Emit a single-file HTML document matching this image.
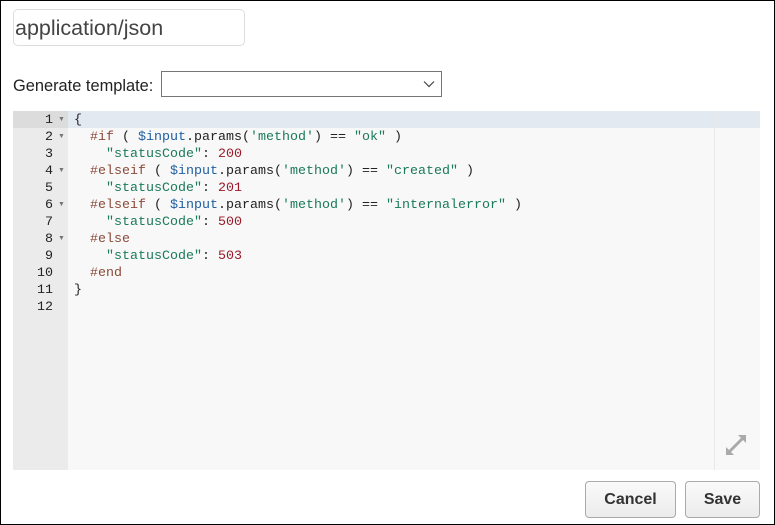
<!DOCTYPE html>
<html><head><style>
html,body{margin:0;padding:0;width:775px;height:525px;overflow:hidden;background:#fff}
body{position:relative;font-family:"Liberation Sans",sans-serif}
.frame{position:absolute;left:0;top:0;width:775px;height:525px;box-sizing:border-box;border:1px solid #000}
.inp{position:absolute;left:13px;top:9px;width:232px;height:37px;border:1px solid #ddd;border-radius:5px;font-size:21.5px;color:#444;line-height:37px;padding-left:1px;box-sizing:border-box}
.lbl{position:absolute;left:13px;top:77px;font-size:16.4px;color:#222}
.sel{position:absolute;left:161px;top:71px;width:281px;height:26px;border:1px solid #767676;box-sizing:border-box}
.ed{position:absolute;left:13px;top:111px;width:747px;height:359px;background:#f8f8f8}
.gut{position:absolute;left:0;top:0;width:55px;height:359px;background:#ebebeb}
.act{position:absolute;left:0;top:0;width:747px;height:17px;background:#e3e9f1}
.gact{position:absolute;left:0;top:0;width:55px;height:17px;background:#dcdcdc}
.pm{position:absolute;left:701px;top:0;width:1px;height:359px;background:#e8e8e8}
.ln,.code{position:absolute;top:1px;font-family:"Liberation Mono",monospace;font-size:13.33px;line-height:17px;white-space:pre;color:#222}
.ln{left:0;width:40px;text-align:right}
.fold{position:absolute;left:45px;font-size:7px;color:#777}
.code{left:61px}
.k{color:#8b4a3a}.v{color:#2060a0}.s{color:#1a7a5a}.n{color:#9a1a2a}
.btn{position:absolute;top:481px;height:37px;border:1px solid #aaa;border-radius:4px;background:linear-gradient(#fafafa,#ececec);font-weight:bold;font-size:16px;color:#333;text-align:center;line-height:36px;box-sizing:border-box}
</style></head><body>
<div class="frame"></div>
<div class="inp">application/json</div>
<div class="lbl">Generate template:</div>
<div class="sel"><svg style="position:absolute;right:6px;top:8px" width="12" height="8"><path d="M1 1.5 L6 6.5 L11 1.5" stroke="#444" fill="none" stroke-width="1.2"/></svg></div>
<div class="ed">
<div class="gut"></div><div class="act"></div><div class="gact"></div><div class="pm"></div>
<div class="ln">1
2
3
4
5
6
7
8
9
10
11
12</div>
<div class="fold" style="top:5px">▼</div><div class="fold" style="top:22px">▼</div><div class="fold" style="top:56px">▼</div><div class="fold" style="top:90px">▼</div><div class="fold" style="top:124px">▼</div>
<div class="code">{
  <span class="k">#if</span> ( <span class="v">$input</span>.params(<span class="s">'method'</span>) == <span class="s">"ok"</span> )
    <span class="s">"statusCode"</span>: <span class="n">200</span>
  <span class="k">#elseif</span> ( <span class="v">$input</span>.params(<span class="s">'method'</span>) == <span class="s">"created"</span> )
    <span class="s">"statusCode"</span>: <span class="n">201</span>
  <span class="k">#elseif</span> ( <span class="v">$input</span>.params(<span class="s">'method'</span>) == <span class="s">"internalerror"</span> )
    <span class="s">"statusCode"</span>: <span class="n">500</span>
  <span class="k">#else</span>
    <span class="s">"statusCode"</span>: <span class="n">503</span>
  <span class="k">#end</span>
}
</div>
<svg style="position:absolute;left:711px;top:322px" width="24" height="24"><g stroke="#aaa" stroke-width="3" fill="#aaa"><path d="M4 20 L20 4" /><path d="M2 22 L2 14 L10 22Z" stroke-width="0"/><path d="M22 2 L22 10 L14 2Z" stroke-width="0"/></g></svg>
</div>
<div class="btn" style="left:585px;width:91px">Cancel</div>
<div class="btn" style="left:685px;width:75px">Save</div>
</body></html>
